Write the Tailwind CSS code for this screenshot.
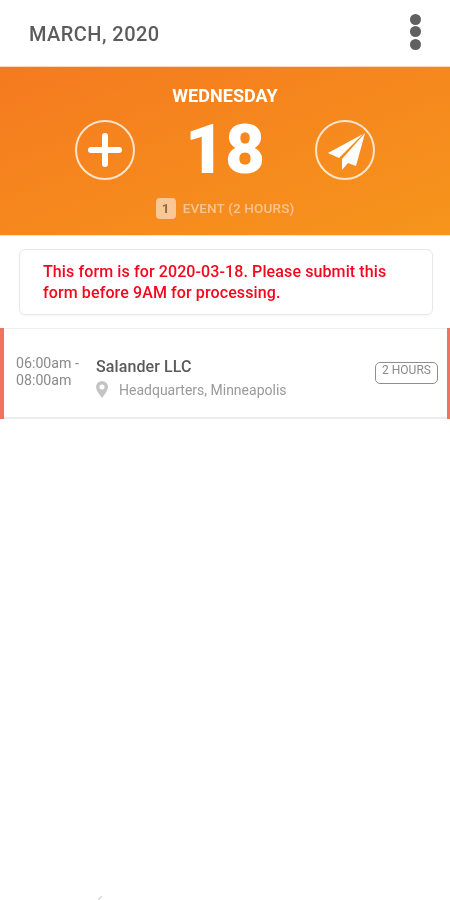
<!DOCTYPE html>
<html>
<head>
<meta charset="utf-8">
<script src="https://cdn.jsdelivr.net/npm/@tailwindcss/browser@4"></script>
</head>
<body class="bg-white font-['Roboto',sans-serif]">
<div class="relative w-[450px] h-[900px] bg-white overflow-hidden flex flex-col blur-[0.5px]">
  <header class="h-[66px] flex items-center justify-between pl-[29px] pr-[29px] shrink-0">
    <span class="text-[20px] font-medium text-[#5c5c5c] leading-none mt-[2px] tracking-[0.45px]">MARCH, 2020</span>
    <div class="flex flex-col gap-[1.500px] mt-[-3px]">
      <span class="w-[11px] h-[11px] rounded-full bg-[#606060]"></span>
      <span class="w-[11px] h-[11px] rounded-full bg-[#606060]"></span>
      <span class="w-[11px] h-[11px] rounded-full bg-[#606060]"></span>
    </div>
  </header>
  <section class="h-[169px] shrink-0 bg-gradient-to-br from-[#f57a1f] to-[#f6951c] flex flex-col items-center border-t border-[#fbd9bf]">
    <div class="text-[18px] font-bold text-white leading-none mt-[20px] tracking-[0.05px]">WEDNESDAY</div>
    <div class="flex items-center w-[300px] justify-between mt-[10px]">
      <div class="w-[60px] h-[60px] rounded-full border-2 border-[#fde4cf] flex items-center justify-center">
        <svg width="34" height="34" viewBox="0 0 34 34"><path d="M17 3v28M3 17h28" stroke="#fff" stroke-width="6" stroke-linecap="round"/></svg>
      </div>
      <div class="text-[69px] font-black text-white leading-none w-[90px] text-center">18</div>
      <div class="w-[60px] h-[60px] rounded-full border-2 border-[#fde4cf] flex items-center justify-center">
        <svg width="40" height="40" viewBox="0 0 40 40"><path d="M38 4 3 23l11 5z" fill="#fff"/><path d="M40 3 17 29v11l6-7 8 3z" fill="#fff"/></svg>
      </div>
    </div>
    <div class="flex items-center gap-[7px] mt-[14px]">
      <span class="w-[20px] h-[21px] rounded-[4px] bg-[#fbc795] flex items-center justify-center text-[13.500px] font-bold text-[#8a6a4c]">1</span>
      <span class="text-[13.500px] font-medium text-[#fbc48f] tracking-[0.15px]">EVENT (2 HOURS)</span>
    </div>
  </section>
  <div class="h-px bg-[#fde0c8] shrink-0"></div>
  <div class="ml-[19px] mr-[17px] mt-[13px] h-[66px] rounded-[6px] border border-[#e8e8e8] shadow-[0_1px_2px_rgba(0,0,0,0.04)] pl-[23px] pr-2 flex items-center shrink-0">
    <p class="text-[16px] leading-[21px] font-medium text-[#f5061f] whitespace-nowrap tracking-[0.11px]">This form is for 2020-03-18. Please submit this<br>form before 9AM for processing.</p>
  </div>
  <div class="mt-[13px] h-[91px] shrink-0 border-l-[4px] border-r-[3px] border-[#ee7460] relative flex">
    <div class="absolute inset-x-0 top-0 h-px bg-[#efefef]"></div>
    <div class="absolute inset-x-0 bottom-0 h-[2px] bg-[#ececec]"></div>
    <div class="w-[80px] pl-[12px] pt-[27px] text-[14.200px] leading-[16.500px] text-[#8a8a8a] shrink-0 whitespace-nowrap">06:00am -<br>08:00am</div>
    <div class="pl-[12px] pt-[29px]">
      <div class="text-[16px] leading-[20px] font-medium text-[#5a5a5a] tracking-[0.1px]">Salander LLC</div>
      <div class="flex items-center mt-[4px]">
        <svg width="12" height="17" viewBox="0 0 12 17"><path fill-rule="evenodd" d="M6 0a6 6 0 0 1 6 6c0 4-6 11-6 11S0 10 0 6a6 6 0 0 1 6-6Zm0 3.500a2.500 2.500 0 1 0 0 5 2.500 2.500 0 0 0 0-5Z" fill="#c4c4c4"/></svg>
        <span class="ml-[11px] text-[14px] leading-[16px] text-[#9a9a9a]">Headquarters, Minneapolis</span>
      </div>
    </div>
    <div class="absolute left-[371px] top-[34px] w-[63px] h-[22px] rounded-[5px] border border-[#8e8e8e] text-[12px] leading-[15px] text-[#8a8a8a] text-center">2 HOURS</div>
  </div>
  <svg class="absolute left-[98px] top-[896px]" width="6" height="4" viewBox="0 0 6 4"><path d="M0 4 4 0" stroke="#d8d8d8" stroke-width="1.500"/></svg>
</div>
</body>
</html>
